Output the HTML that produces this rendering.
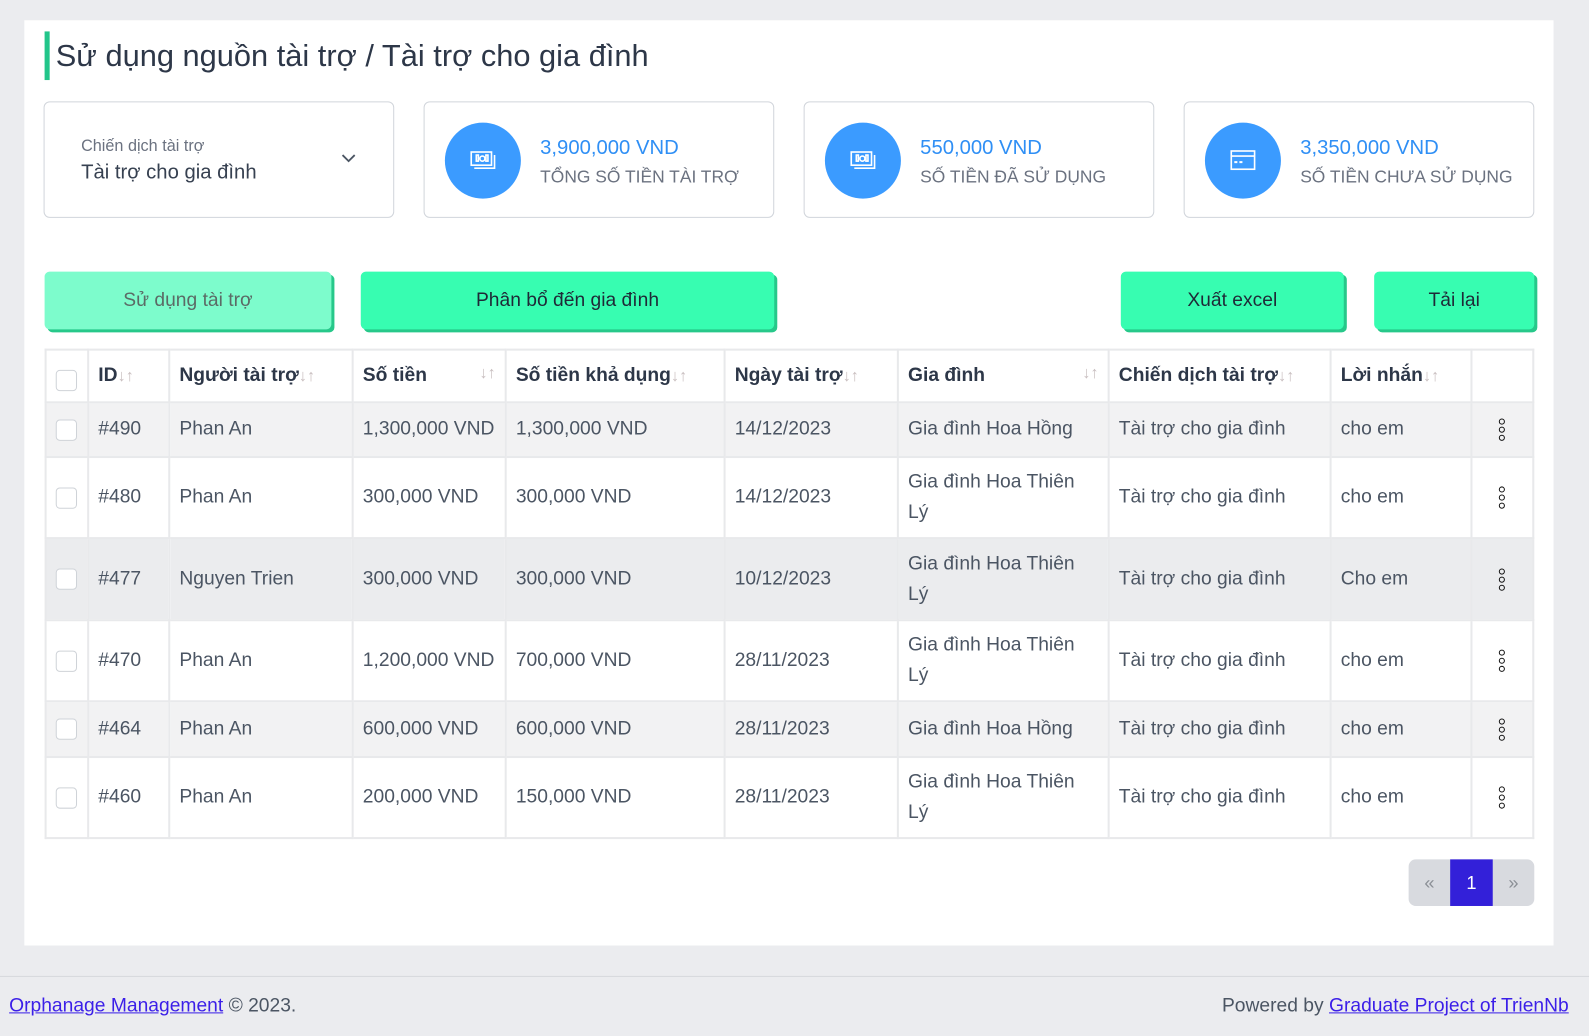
<!DOCTYPE html>
<html><head><meta charset="utf-8">
<style>
*{box-sizing:border-box;margin:0;padding:0}
body{width:1589px;height:1036px;background:#ebecef;font-family:"Liberation Sans","DejaVu Sans",sans-serif;color:#374151;position:relative;overflow:hidden}
#w{position:absolute;left:0;top:0;width:1568px;height:1022px;transform:scale(1.0134);transform-origin:0 0}
.panel{position:absolute;left:24px;top:20px;width:1509px;height:913px;background:#fff}
.title{position:absolute;left:44px;top:31px;height:48px;border-left:5px solid #22c58a;padding-left:6px;font-size:30.4px;line-height:48px;color:#2d3748}
.card{position:absolute;top:100px;height:115px;width:346px;border:1px solid #d1d5db;border-radius:6px;background:#fff}
.sel .lbl{position:absolute;left:36px;top:35px;font-size:16px;color:#6b7280}
.sel .val{position:absolute;left:36px;top:58px;font-size:20px;color:#374151}
.sel svg{position:absolute;right:36px;top:50px}
.circ{position:absolute;left:20px;top:20px;width:75px;height:75px;border-radius:50%;background:#3b9bff}
.circ svg{position:absolute;left:24px;top:24px}
.amt{position:absolute;left:114px;top:34px;font-size:20px;color:#2f8ff5}
.cap{position:absolute;left:114px;top:63px;font-size:17.2px;color:#6b7280;white-space:nowrap}
.btn{position:absolute;top:268px;height:57px;background:#37fdb1;border-radius:5px;box-shadow:3px 3px 0 #27c88a;font-size:19px;color:#1f2937;text-align:center;line-height:57px}
table{position:absolute;left:44px;top:344px;border-collapse:collapse;table-layout:fixed;font-size:19px;width:1468px}
td,th{border:2px solid #e8e9eb;padding:0 9px;text-align:left;vertical-align:middle;color:#4b5563;font-weight:normal;white-space:nowrap;overflow:hidden}
td.w{white-space:normal;line-height:30px}
th{font-weight:bold;color:#2d3748;height:52px}
.ar{color:#c9bfc0;font-weight:normal;font-size:16px}
.cb{width:21px;height:21px;border:1px solid #cfd3d8;border-radius:4px;background:#fff}
.dots{width:8px;margin:auto}
.dots i{display:block;width:6px;height:6px;border:1.5px solid #111;border-radius:50%;margin:2px 0}
.pg{position:absolute;top:848px;height:46px;line-height:46px;text-align:center;font-size:18px}
.foot{position:absolute;top:982px;font-size:19px;color:#4b5563}
.foot a{color:#3b1fe8;text-decoration:underline}
</style></head><body>
<div id="w">
<div class="panel"></div>
<div class="title">Sử dụng nguồn tài trợ / Tài trợ cho gia đình</div>

<div class="card sel" style="left:43px"><div class="lbl">Chiến dịch tài trợ</div><div class="val">Tài trợ cho gia đình</div>
<svg width="16" height="10" viewBox="0 0 16 10"><path d="M2 2l6 6 6-6" fill="none" stroke="#4b5563" stroke-width="1.8"/></svg></div>

<div class="card" style="left:418px"><div class="circ"><svg width="27" height="27" viewBox="0 0 27 27" fill="none" stroke="#fff" stroke-width="1.6"><rect x="2" y="5" width="20" height="13"/><path d="M5 21h20V8"/><rect x="7" y="8" width="2" height="6"/><circle cx="13" cy="11.5" r="2.5"/><rect x="16.5" y="8" width="2" height="6"/></svg></div><div class="amt">3,900,000 VND</div><div class="cap">TỔNG SỐ TIỀN TÀI TRỢ</div></div>

<div class="card" style="left:793px"><div class="circ"><svg width="27" height="27" viewBox="0 0 27 27" fill="none" stroke="#fff" stroke-width="1.6"><rect x="2" y="5" width="20" height="13"/><path d="M5 21h20V8"/><rect x="7" y="8" width="2" height="6"/><circle cx="13" cy="11.5" r="2.5"/><rect x="16.5" y="8" width="2" height="6"/></svg></div><div class="amt">550,000 VND</div><div class="cap">SỐ TIỀN ĐÃ SỬ DỤNG</div></div>

<div class="card" style="left:1168px"><div class="circ"><svg width="27" height="27" viewBox="0 0 27 27" fill="none" stroke="#fff" stroke-width="1.6"><rect x="2" y="4" width="23" height="18"/><path d="M2 9h23"/><path d="M5 15h3M10 15h3" stroke-width="2"/></svg></div><div class="amt">3,350,000 VND</div><div class="cap">SỐ TIỀN CHƯA SỬ DỤNG</div></div>

<div class="btn" style="left:44px;width:283px;background:#7dfccc;color:#5b6b66">Sử dụng tài trợ</div>
<div class="btn" style="left:356px;width:408px">Phân bổ đến gia đình</div>
<div class="btn" style="left:1106px;width:220px">Xuất excel</div>
<div class="btn" style="left:1356px;width:158px">Tải lại</div>

<table>
<colgroup><col style="width:42px"><col style="width:80px"><col style="width:181px"><col style="width:151px"><col style="width:216px"><col style="width:171px"><col style="width:208px"><col style="width:219px"><col style="width:139px"><col style="width:61px"></colgroup>
<tr><th style="padding-top:8px"><div class="cb"></div></th><th>ID<span class="ar">↓↑</span></th><th>Người tài trợ<span class="ar">↓↑</span></th><th>Số tiền<span class="ar" style="float:right">↓↑</span></th><th>Số tiền khả dụng<span class="ar">↓↑</span></th><th>Ngày tài trợ<span class="ar">↓↑</span></th><th>Gia đình<span class="ar" style="float:right">↓↑</span></th><th>Chiến dịch tài trợ<span class="ar">↓↑</span></th><th>Lời nhắn<span class="ar">↓↑</span></th><th></th></tr>
<tr style="height:54px;background:#f2f2f3"><td><div class="cb"></div></td><td>#490</td><td>Phan An</td><td>1,300,000 VND</td><td>1,300,000 VND</td><td>14/12/2023</td><td>Gia đình Hoa Hồng</td><td>Tài trợ cho gia đình</td><td>cho em</td><td><div class="dots"><i></i><i></i><i></i></div></td></tr>
<tr style="height:80px"><td><div class="cb"></div></td><td>#480</td><td>Phan An</td><td>300,000 VND</td><td>300,000 VND</td><td>14/12/2023</td><td class="w">Gia đình Hoa Thiên Lý</td><td>Tài trợ cho gia đình</td><td>cho em</td><td><div class="dots"><i></i><i></i><i></i></div></td></tr>
<tr style="height:81px;background:#ebecee"><td><div class="cb"></div></td><td>#477</td><td>Nguyen Trien</td><td>300,000 VND</td><td>300,000 VND</td><td>10/12/2023</td><td class="w">Gia đình Hoa Thiên Lý</td><td>Tài trợ cho gia đình</td><td>Cho em</td><td><div class="dots"><i></i><i></i><i></i></div></td></tr>
<tr style="height:80px"><td><div class="cb"></div></td><td>#470</td><td>Phan An</td><td>1,200,000 VND</td><td>700,000 VND</td><td>28/11/2023</td><td class="w">Gia đình Hoa Thiên Lý</td><td>Tài trợ cho gia đình</td><td>cho em</td><td><div class="dots"><i></i><i></i><i></i></div></td></tr>
<tr style="height:55px;background:#f2f2f3"><td><div class="cb"></div></td><td>#464</td><td>Phan An</td><td>600,000 VND</td><td>600,000 VND</td><td>28/11/2023</td><td>Gia đình Hoa Hồng</td><td>Tài trợ cho gia đình</td><td>cho em</td><td><div class="dots"><i></i><i></i><i></i></div></td></tr>
<tr style="height:80px"><td><div class="cb"></div></td><td>#460</td><td>Phan An</td><td>200,000 VND</td><td>150,000 VND</td><td>28/11/2023</td><td class="w">Gia đình Hoa Thiên Lý</td><td>Tài trợ cho gia đình</td><td>cho em</td><td><div class="dots"><i></i><i></i><i></i></div></td></tr>
</table>

<div class="pg" style="left:1390px;width:124px;background:#d8dadf;border-radius:7px"></div>
<div class="pg" style="left:1390px;width:41px;color:#8b8f96">«</div>
<div class="pg" style="left:1431px;width:42px;background:#3320d9;color:#fff">1</div>
<div class="pg" style="left:1473px;width:41px;color:#8b8f96">»</div>

<div style="position:absolute;left:0;top:963px;width:1589px;height:1px;background:#d6d8dc"></div>
<div class="foot" style="left:9px"><a>Orphanage Management</a> © 2023.</div>
<div class="foot" style="right:20px">Powered by <a>Graduate Project of TrienNb</a></div>
</div>
</body></html>
